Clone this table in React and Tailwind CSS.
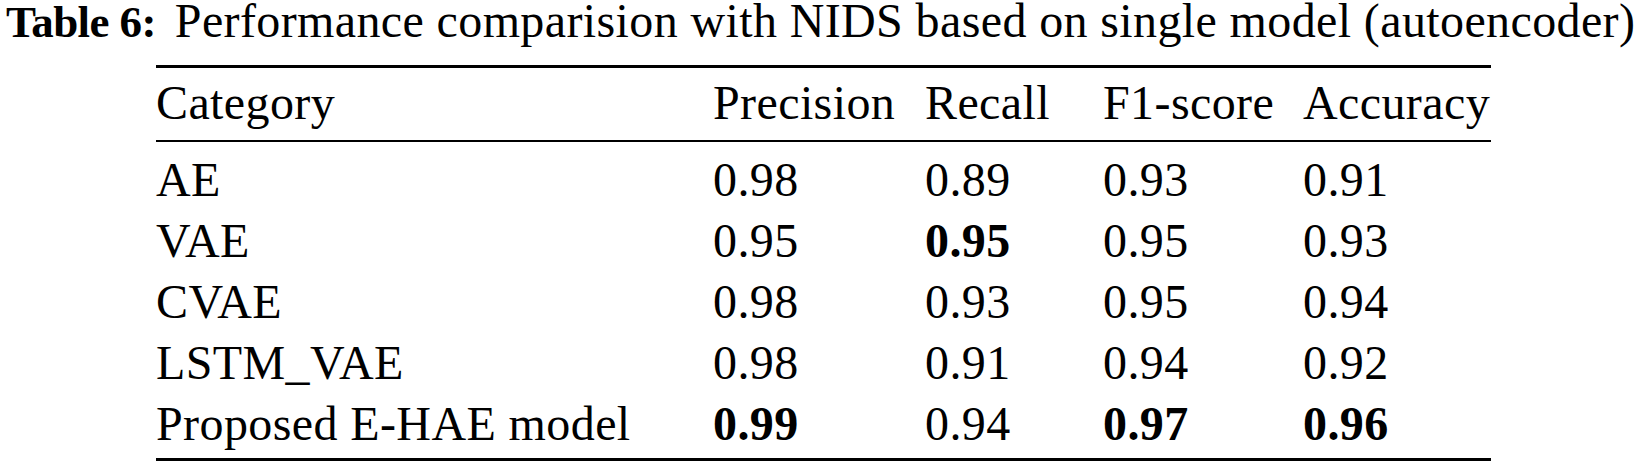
const rows = [
  { name: 'AE', vals: ['0.98', '0.89', '0.93', '0.91'], bold: [] },
  { name: 'VAE', vals: ['0.95', '0.95', '0.95', '0.93'], bold: [1] },
  { name: 'CVAE', vals: ['0.98', '0.93', '0.95', '0.94'], bold: [] },
  { name: 'LSTM_VAE', vals: ['0.98', '0.91', '0.94', '0.92'], bold: [] },
  { name: 'Proposed E-HAE model', vals: ['0.99', '0.94', '0.97', '0.96'], bold: [0, 2, 3] },
]

const cols = 'grid grid-cols-[557px_212px_178px_200px_1fr]'

export default function App() {
  return (
    <div className="h-[467px] w-[1637px] overflow-hidden bg-white font-['Liberation_Serif','Times_New_Roman',serif] text-black">
      <div className="h-[42px] whitespace-nowrap pl-[6px] leading-[42px]">
        <span className="text-[45px] font-bold tracking-[-0.6px]">Table 6:</span>
        <span className="ml-[19px] text-[48px] tracking-[0.38px]">Performance comparision with NIDS based on single model (autoencoder)</span>
      </div>
      <div className="ml-[156px] mt-[23px] w-[1335px] text-[48px] tracking-[0.4px]">
        <div className={`${cols} border-t-[3px] border-b-2 border-black pb-[2px] leading-[70px]`}>
          <div>Category</div>
          <div>Precision</div>
          <div>Recall</div>
          <div>F1-score</div>
          <div>Accuracy</div>
        </div>
        <div className="border-b-[3px] border-black pb-[4px] pt-[7px] leading-[61px]">
          {rows.map((r) => (
            <div key={r.name} className={cols}>
              <div>{r.name}</div>
              {r.vals.map((v, i) => (
                <div key={i} className={r.bold.includes(i) ? 'font-bold' : ''}>
                  {v}
                </div>
              ))}
            </div>
          ))}
        </div>
      </div>
    </div>
  )
}
